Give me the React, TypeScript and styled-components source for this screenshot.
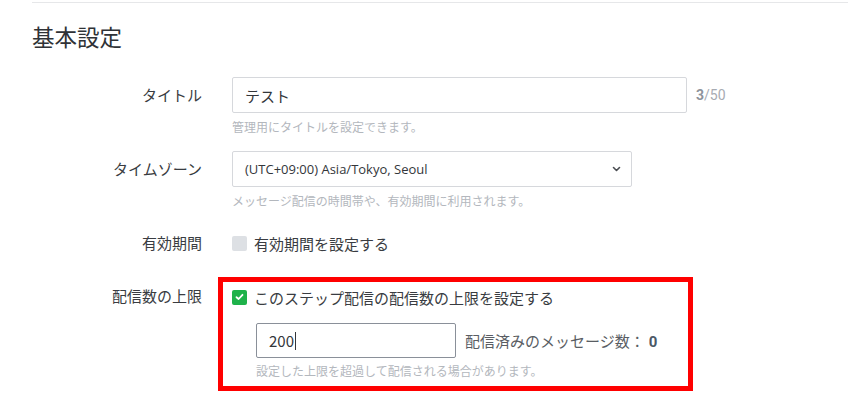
import styled, { createGlobalStyle } from 'styled-components';

const GlobalStyle = createGlobalStyle`
    html, body {
        margin: 0;
        padding: 0;
        background: #ffffff;
    }
    body {
        font-family: Roboto, "Noto Sans CJK JP", sans-serif;
        color: #393c41;
    }
`;

const Section = styled.section`
    margin: 2px 0 0 32px;
    border-top: 1px solid #e6e7e9;
`;

const Heading = styled.h2`
    margin: 0;
    padding-top: 17px;
    font-size: 22.5px;
    line-height: 32px;
    font-weight: 400;
    color: #2f3236;
    font-family: "Noto Sans CJK JP", sans-serif;
`;

const Form = styled.div`
    display: flex;
    flex-direction: column;
    padding-top: 25px;
`;

const Row = styled.div<{ $gap?: number }>`
    display: grid;
    grid-template-columns: 170px 1fr;
    column-gap: 30px;
    align-items: start;
    margin-bottom: ${p => p.$gap ?? 0}px;
`;

const Label = styled.div<{ $line: number; $top?: number }>`
    text-align: right;
    font-family: "Noto Sans CJK JP", sans-serif;
    font-size: 15px;
    line-height: ${p => p.$line}px;
    padding-top: ${p => p.$top ?? 0}px;
    color: #393c41;
`;

const Field = styled.div`
    display: flex;
    flex-direction: column;
`;

const Inline = styled.div`
    display: flex;
    align-items: center;
    gap: 9px;
`;

const TextBox = styled.div<{ $width: number; $focused?: boolean; $height?: number }>`
    box-sizing: border-box;
    width: ${p => p.$width}px;
    height: ${p => p.$height ?? 36}px;
    border: 1px solid ${p => (p.$focused ? '#8a9099' : '#d6d8dc')};
    border-radius: 2px;
    padding: 0 12px;
    display: flex;
    align-items: center;
    font-family: "Noto Sans CJK JP", sans-serif;
    font-size: 15px;
    color: #33363a;
    background: #fff;
`;

const SelectBox = styled(TextBox)`
    justify-content: space-between;
    font-family: "Open Sans", "Noto Sans CJK JP", sans-serif;
    font-size: 13px;
    padding-right: 10px;
`;

const Caret = styled.span`
    display: inline-block;
    width: 1px;
    height: 18px;
    background: #33363a;
    margin-left: 1px;
`;

const Counter = styled.span`
    font-family: Roboto, sans-serif;
    font-size: 14px;
    color: #a7abb2;
    b {
        font-weight: 700;
        color: #8e939b;
    }
`;

const Help = styled.div<{ $top?: number }>`
    margin-top: ${p => p.$top ?? 6}px;
    font-family: "Noto Sans CJK JP", sans-serif;
    font-size: 12px;
    line-height: 16px;
    color: #b3b7bd;
`;

const Check = styled.label`
    display: flex;
    align-items: center;
    gap: 7px;
    height: 24px;
    font-family: "Noto Sans CJK JP", sans-serif;
    font-size: 15px;
    color: #393c41;
`;

const Box = styled.span<{ $checked?: boolean }>`
    box-sizing: border-box;
    width: 15px;
    height: 15px;
    border-radius: 2px;
    background: ${p => (p.$checked ? '#1eb24a' : '#dde0e4')};
    display: flex;
    align-items: center;
    justify-content: center;
`;

const Highlight = styled.div`
    margin-left: -14px;
    width: 475px;
    box-sizing: border-box;
    border: 5px solid #ff0000;
    padding: 3px 9px 7px;
    display: flex;
    flex-direction: column;
`;

const Limit = styled.div`
    display: flex;
    flex-direction: column;
    padding-left: 24px;
    margin-top: 14px;
`;

const Sent = styled.span`
    font-family: "Noto Sans CJK JP", sans-serif;
    font-size: 15px;
    color: #595d63;
    b {
        font-family: Roboto, sans-serif;
        font-weight: 700;
        color: #4b5866;
        margin-left: 4px;
    }
`;

const Chevron = () => (
    <svg width="9" height="6" viewBox="0 0 9 6">
        <path d="M1.5 1.5 L4.5 4.5 L7.5 1.5" fill="none" stroke="#4a4d52" strokeWidth="1.6" strokeLinecap="round" strokeLinejoin="round" />
    </svg>
);

const Tick = () => (
    <svg width="9" height="8" viewBox="0 0 9 8">
        <path d="M1.5 4.2 L3.6 6 L7.5 1.8" fill="none" stroke="#ffffff" strokeWidth="1.8" strokeLinecap="round" strokeLinejoin="round" />
    </svg>
);

const App = () => {
    const title = 'テスト';
    return (
        <>
            <GlobalStyle />
            <Section>
                <Heading>基本設定</Heading>
                <Form>
                    <Row $gap={16}>
                        <Label $line={36}>タイトル</Label>
                        <Field>
                            <Inline>
                                <TextBox $width={455}>{title}</TextBox>
                                <Counter><b>{title.length}</b>/50</Counter>
                            </Inline>
                            <Help>管理用にタイトルを設定できます。</Help>
                        </Field>
                    </Row>
                    <Row $gap={22}>
                        <Label $line={36}>タイムゾーン</Label>
                        <Field>
                            <SelectBox $width={400}>
                                <span>(UTC+09:00) Asia/Tokyo, Seoul</span>
                                <Chevron />
                            </SelectBox>
                            <Help>メッセージ配信の時間帯や、有効期間に利用されます。</Help>
                        </Field>
                    </Row>
                    <Row $gap={22}>
                        <Label $line={24}>有効期間</Label>
                        <Field>
                            <Check><Box />有効期間を設定する</Check>
                        </Field>
                    </Row>
                    <Row>
                        <Label $line={24} $top={7}>配信数の上限</Label>
                        <Highlight>
                            <Check><Box $checked><Tick /></Box>このステップ配信の配信数の上限を設定する</Check>
                            <Limit>
                                <Inline>
                                    <TextBox $width={200} $height={35} $focused>200<Caret /></TextBox>
                                    <Sent>配信済みのメッセージ数：<b>0</b></Sent>
                                </Inline>
                                <Help $top={5}>設定した上限を超過して配信される場合があります。</Help>
                            </Limit>
                        </Highlight>
                    </Row>
                </Form>
            </Section>
        </>
    );
};

export default App;
